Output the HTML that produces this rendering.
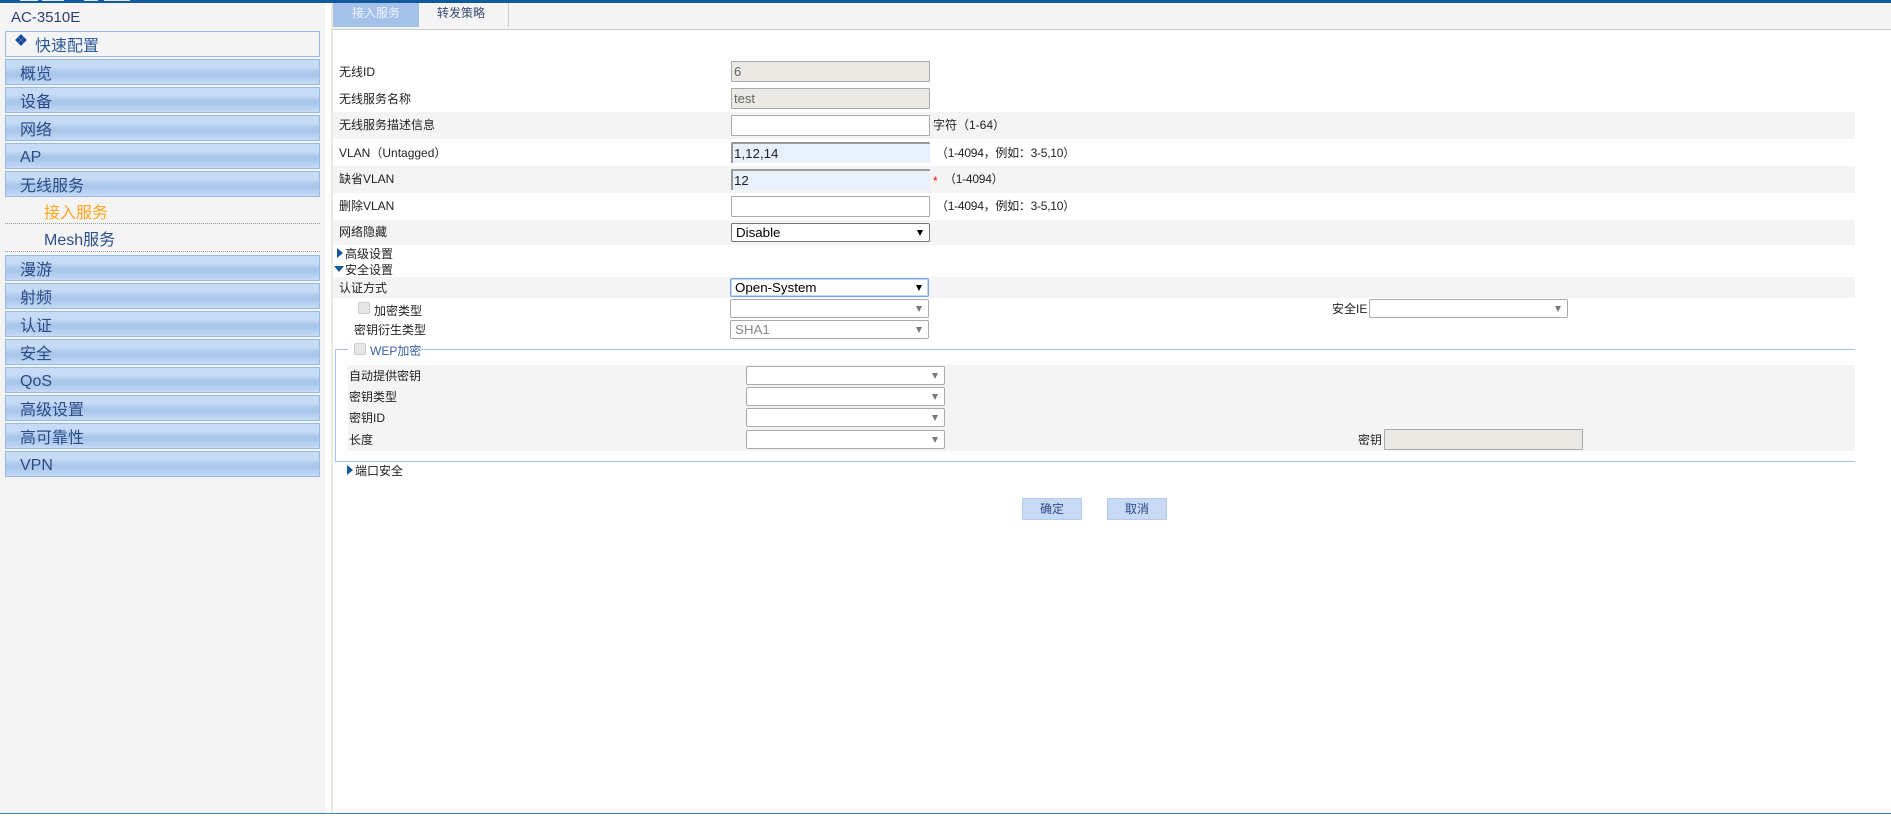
<!DOCTYPE html>
<html lang="zh"><head><meta charset="utf-8"><title>AC-3510E</title>
<style>
html,body{margin:0;padding:0;width:1891px;height:817px;overflow:hidden;background:#fff}
body{position:relative;font-family:"Liberation Sans","Noto Sans CJK SC",sans-serif;font-size:12px;color:#222}
div,span{position:absolute;box-sizing:border-box;white-space:nowrap}
.m{left:5px;width:315px;height:26px;border:1px solid #96bbe6;background:linear-gradient(#c6dbf6 0,#c6dbf6 28%,#a9c7ea 55%,#a9c7ea 65%,#c6dbf6 100%);color:#2b4a86;font-size:16px;line-height:29px;padding-left:14px;overflow:hidden}
.la{line-height:27px}
.s{left:44px;font-size:16px;line-height:20px;color:#2b4f8a}
.d{left:5px;width:315px;border-top:1px dotted #999;height:0}
.st{left:333px;width:1522px;background:#f4f4f4}
.l{line-height:14px;height:14px;color:#222}
.i{height:21px;left:731px;width:199px;border:1px solid #aaa;background:#fff;font-size:13px;line-height:19px;padding-left:2px;color:#666;border-radius:1px}
.g{background:#ebe9e3}
.f{background:#e8f0fb;border:0;border-top:2px solid #999;border-left:2px solid #999;color:#222;font-size:13.33px;line-height:19px;padding-left:1px}
.se{left:730px;width:199px;height:19px;border:1px solid #aaa;border-radius:2px;background:#fff;font-size:13.33px;line-height:17px;padding-left:4px;color:#888}
.se:after{content:"";position:absolute;right:6px;top:6px;border-left:3px solid transparent;border-right:3px solid transparent;border-top:6px solid #777}
.b:after{border-top-color:#000}
.tr{width:0;height:0;border-top:5px solid transparent;border-bottom:5px solid transparent;border-left:6px solid #11589c}
.td{width:0;height:0;border-left:5px solid transparent;border-right:5px solid transparent;border-top:6px solid #11589c}
.c{width:12px;height:12px;border:1px solid #ccc;border-radius:2px;background:#e6e6e6}
.btn{width:60px;height:22px;background:#c7d9f3;border:1px solid #b3cbee;color:#2b4a86;text-align:center;line-height:20px;top:498px}
.x{color:#222;line-height:14px}
.sp{letter-spacing:-.25px}
.q{width:4px;height:4px;background:#11479a;transform:rotate(45deg)}
.w{top:0;height:1px;background:#dfe9f4}
</style></head><body>

<div style="left:0;top:0;width:1891px;height:3px;background:#125a9e"></div>
<div class="w" style="left:20px;width:18px"></div>
<div class="w" style="left:42px;width:22px"></div>
<div class="w" style="left:84px;width:14px"></div>
<div class="w" style="left:104px;width:26px"></div>
<div style="left:0;top:3px;width:325px;height:810px;background:#f4f4f4"></div>
<div style="left:331px;top:3px;width:2px;height:810px;background:#ece9d8"></div>
<div style="left:0;top:813px;width:1891px;height:1px;background:#3f7fb5"></div>

<div style="left:11px;top:8px;font-size:15px;line-height:20px;color:#2f3f73">AC-3510E</div>
<div style="left:5px;top:31px;width:315px;height:26px;border:1px solid #96bbe6;background:#f4f4f4;color:#2b5a9a;font-size:16px;line-height:29px;padding-left:29px;overflow:hidden">快速配置</div>
<div class="q" style="left:19px;top:35px"></div>
<div class="q" style="left:16px;top:38px"></div>
<div class="q" style="left:22px;top:38px"></div>
<div class="q" style="left:19px;top:41px"></div>

<div class="m" style="top:59px">概览</div>
<div class="m" style="top:87px">设备</div>
<div class="m" style="top:115px">网络</div>
<div class="m la" style="top:143px">AP</div>
<div class="m" style="top:171px">无线服务</div>
<div class="s" style="top:204px;color:#ffa51f">接入服务</div>
<div class="d" style="top:223px"></div>
<div class="s" style="top:231px">Mesh服务</div>
<div class="d" style="top:251px"></div>
<div class="m" style="top:255px">漫游</div>
<div class="m" style="top:283px">射频</div>
<div class="m" style="top:311px">认证</div>
<div class="m" style="top:339px">安全</div>
<div class="m la" style="top:367px">QoS</div>
<div class="m" style="top:395px">高级设置</div>
<div class="m" style="top:423px">高可靠性</div>
<div class="m la" style="top:451px">VPN</div>

<div style="left:333px;top:3px;width:1558px;height:27px;background:#f4f4f4;border-bottom:1px solid #ccc"></div>
<div style="left:333px;top:3px;width:86px;height:24px;background:#a4c1e9;color:#eef3fb;line-height:21px;padding-left:19px">接入服务</div>
<div style="left:437px;top:3px;line-height:21px;color:#3a4a70">转发策略</div>
<div style="left:508px;top:3px;width:1px;height:24px;background:#ccc"></div>

<div class="st" style="top:112px;height:27px"></div>
<div class="st" style="top:166px;height:27px"></div>
<div class="st" style="top:220px;height:25px"></div>
<div class="st" style="top:277px;height:21px"></div>

<div class="l" style="left:339px;top:65px">无线ID</div>
<div class="l" style="left:339px;top:92px">无线服务名称</div>
<div class="l" style="left:339px;top:118px">无线服务描述信息</div>
<div class="l" style="left:339px;top:146px">VLAN（Untagged）</div>
<div class="l" style="left:339px;top:172px">缺省VLAN</div>
<div class="l" style="left:339px;top:199px">删除VLAN</div>
<div class="l" style="left:339px;top:225px">网络隐藏</div>

<div class="i g" style="top:61px">6</div>
<div class="i g" style="top:88px">test</div>
<div class="i" style="top:115px"></div>
<div class="i f" style="top:142px">1,12,14</div>
<div class="i f" style="top:169px">12</div>
<div class="i" style="top:196px"></div>
<div class="se b" style="left:731px;top:223px;border-color:#767676;color:#000;padding-left:4px">Disable</div>

<div class="x" style="left:933px;top:118px">字符（1-64）</div>
<div class="x sp" style="left:936px;top:146px">（1-4094，例如：3-5,10）</div>
<div class="x" style="left:933px;top:174px;color:#f00">*</div>
<div class="x sp" style="left:944px;top:172px">（1-4094）</div>
<div class="x sp" style="left:936px;top:199px">（1-4094，例如：3-5,10）</div>

<div class="tr" style="left:337px;top:248px"></div>
<div class="l" style="left:345px;top:247px">高级设置</div>
<div class="td" style="left:334px;top:266px"></div>
<div class="l" style="left:345px;top:263px">安全设置</div>

<div class="l" style="left:339px;top:281px">认证方式</div>
<div class="se b" style="top:278px;border:1px solid #7aa2e6;box-shadow:0 0 0 1px #c4d7f4 inset;color:#000">Open-System</div>
<div class="c" style="left:358px;top:302px"></div>
<div class="l" style="left:374px;top:304px">加密类型</div>
<div class="se" style="top:299px"></div>
<div class="l" style="left:354px;top:323px">密钥衍生类型</div>
<div class="se" style="top:320px">SHA1</div>
<div class="l" style="left:1332px;top:302px">安全IE</div>
<div class="se" style="left:1369px;top:299px;width:199px"></div>

<div style="left:335px;top:349px;width:1520px;height:113px;border:1px solid #a4c1e9;border-right:0"></div>
<div style="left:348px;top:343px;width:73px;height:14px;background:#fff"></div>
<div class="c" style="left:354px;top:343px"></div>
<div class="l" style="left:370px;top:344px;color:#3a5f9f">WEP加密</div>

<div style="left:348px;top:365px;width:1507px;height:86px;background:#f4f4f4"></div>
<div class="l" style="left:349px;top:369px">自动提供密钥</div>
<div class="l" style="left:349px;top:390px">密钥类型</div>
<div class="l" style="left:349px;top:411px">密钥ID</div>
<div class="l" style="left:349px;top:433px">长度</div>
<div class="se" style="left:746px;top:366px"></div>
<div class="se" style="left:746px;top:387px"></div>
<div class="se" style="left:746px;top:408px"></div>
<div class="se" style="left:746px;top:430px"></div>
<div class="l" style="left:1358px;top:433px">密钥</div>
<div class="i g" style="left:1384px;top:429px;width:199px"></div>

<div class="tr" style="left:347px;top:465px"></div>
<div class="l" style="left:355px;top:464px">端口安全</div>

<div class="btn" style="left:1022px">确定</div>
<div class="btn" style="left:1107px">取消</div>
</body></html>
